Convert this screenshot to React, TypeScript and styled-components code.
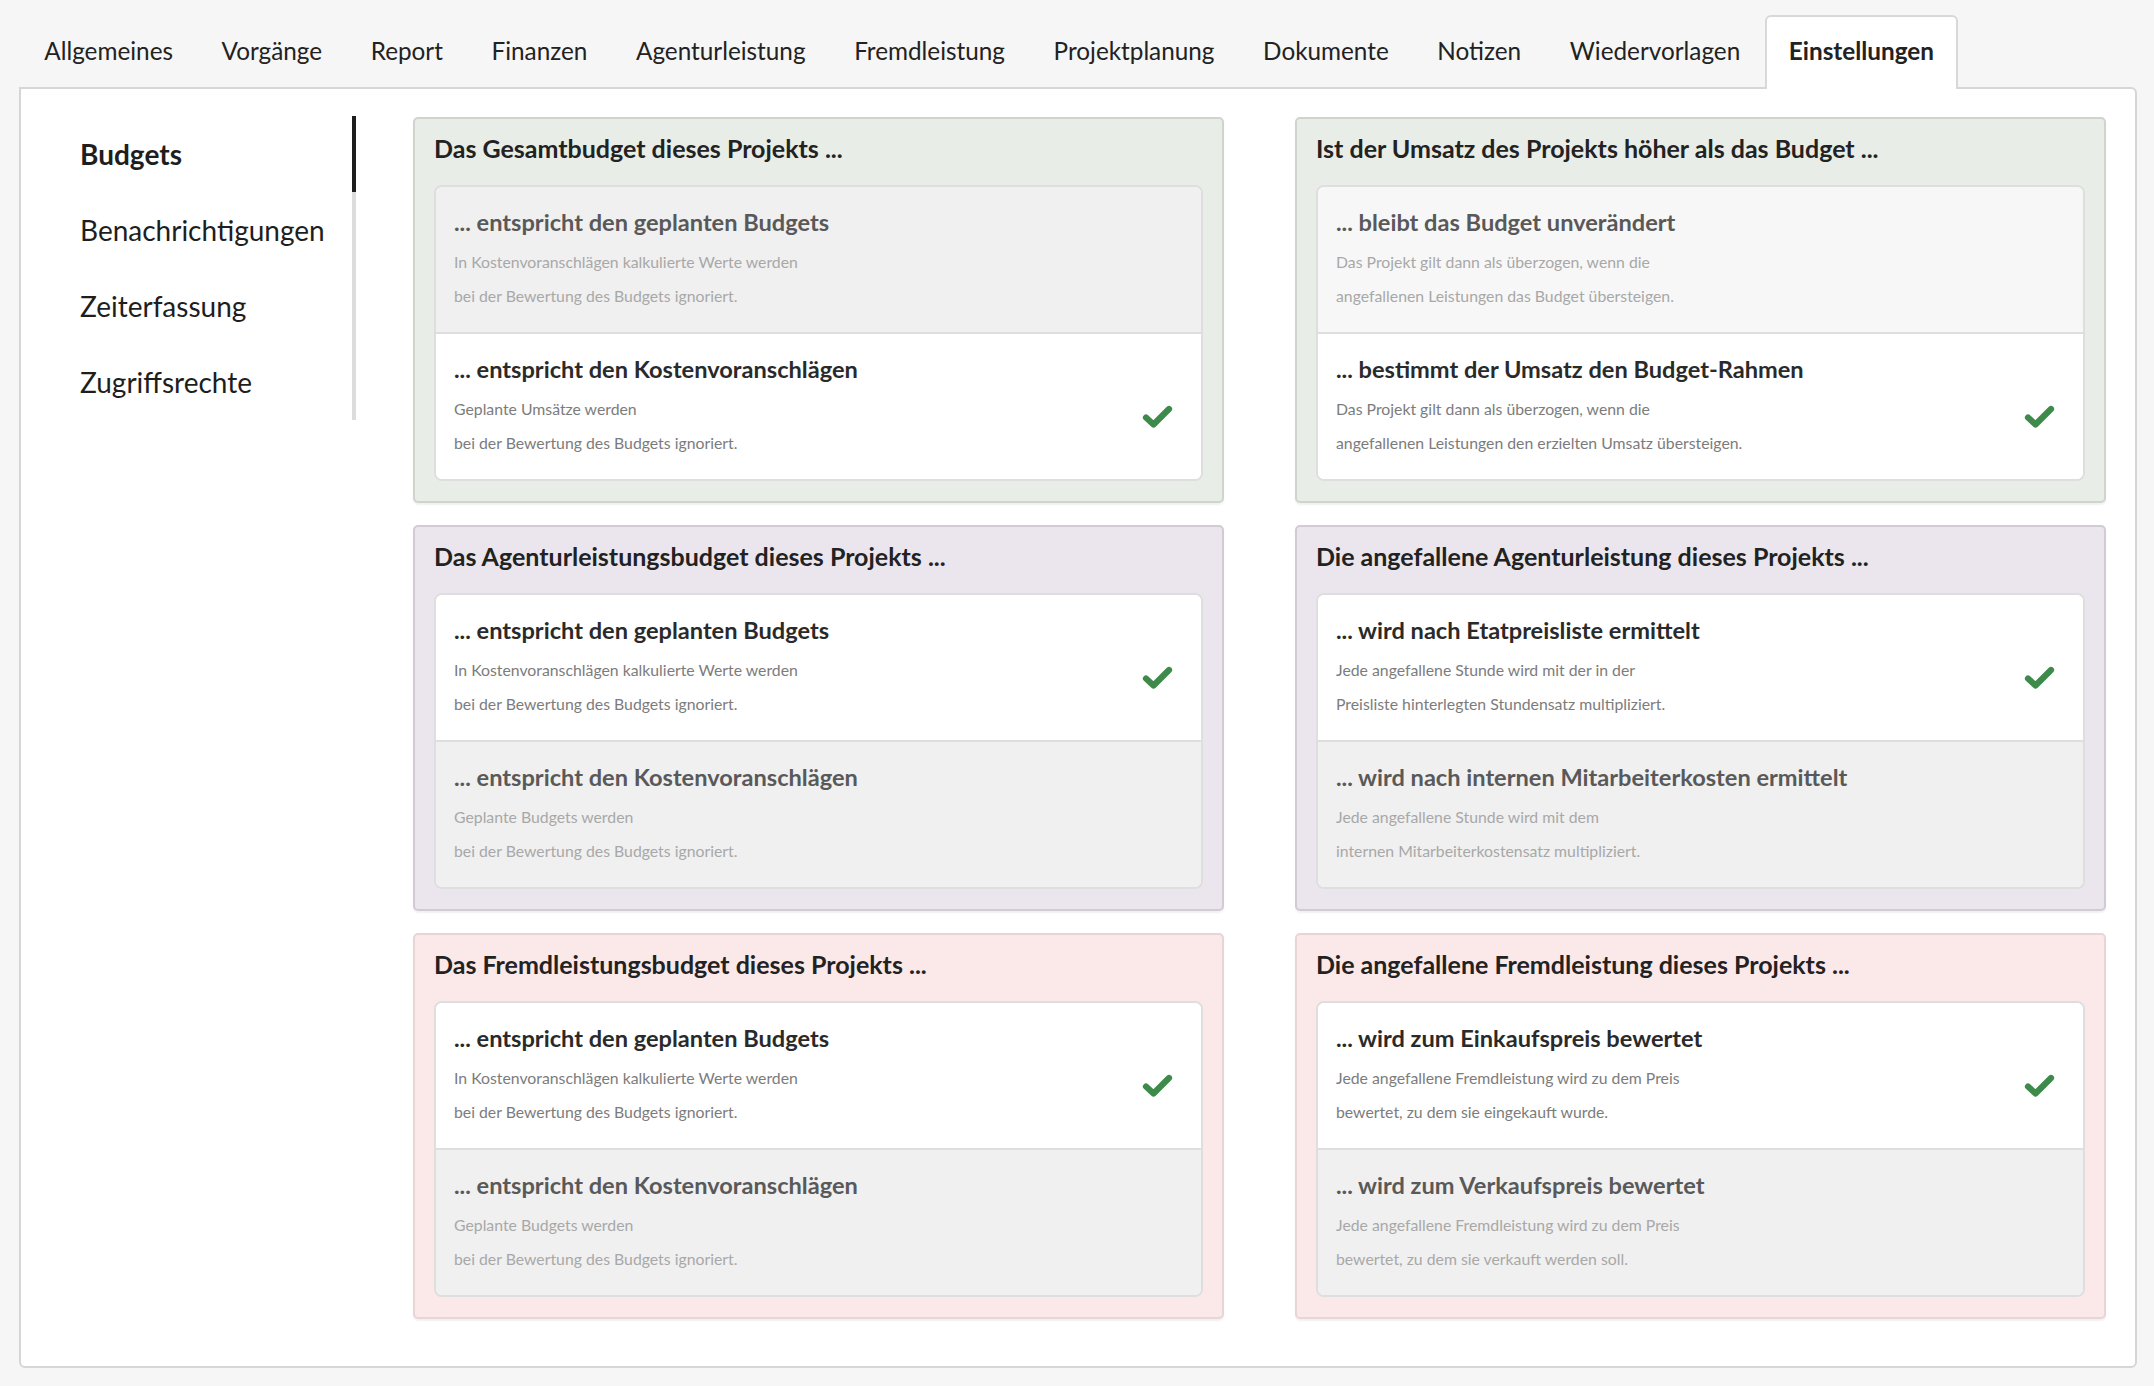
import styled, { createGlobalStyle } from "styled-components";

const GlobalStyle = createGlobalStyle`
    body {
        margin: 0;
        background-color: #f6f6f6;
        font-family: Lato, "Open Sans", sans-serif;
        color: #222;
    }
`;

type Tone = "green" | "purple" | "red";

const tones: Record<Tone, { bg: string; border: string }> = {
    green: { bg: "#e9ede7", border: "#cfd4cd" },
    purple: { bg: "#ebe6ed", border: "#d2cbd6" },
    red: { bg: "#fbe8e8", border: "#e8d5d5" },
};

const Page = styled.div`
    display: flex;
    flex-direction: column;
    min-height: 1386px;
    box-sizing: border-box;
    padding-bottom: 18px;
`;

const TabBar = styled.div`
    display: flex;
    align-items: flex-end;
    padding: 15px 17px 0 20px;
`;

const Tab = styled.div<{ $active?: boolean }>`
    position: relative;
    z-index: 2;
    margin-bottom: -2px;
    padding: 20px 22.3px 24px;
    font-size: 24.3px;
    line-height: 28px;
    font-weight: ${(p) => (p.$active ? 700 : 400)};
    color: #222;
    border: 2px solid ${(p) => (p.$active ? "#d8d8d8" : "transparent")};
    border-bottom: none;
    border-radius: 6px 6px 0 0;
    background-color: ${(p) => (p.$active ? "white" : "transparent")};
    white-space: nowrap;
`;

const Frame = styled.div`
    display: flex;
    align-items: flex-start;
    margin: 0 17px 0 19px;
    padding: 28px 29px 47px 0;
    background-color: white;
    border: 2px solid #d6d6d6;
    border-radius: 0 6px 6px 6px;
`;

const SideNav = styled.nav`
    width: 331px;
    flex-shrink: 0;
    margin-top: -1px;
    margin-right: 57px;
    border-right: 4px solid #dcdcdc;
`;

const NavItem = styled.div<{ $active?: boolean }>`
    margin-right: -4px;
    padding-left: 59px;
    font-size: 28px;
    line-height: 76px;
    font-weight: ${(p) => (p.$active ? 700 : 400)};
    color: #1e1e1e;
    border-right: 4px solid ${(p) => (p.$active ? "#1e1e1e" : "transparent")};
`;

const Grid = styled.div`
    flex: 1;
    display: grid;
    grid-template-columns: 1fr 1fr;
    column-gap: 71px;
    row-gap: 22px;
`;

const Panel = styled.section<{ $tone: Tone }>`
    padding: 0 19px 20px;
    background-color: ${(p) => tones[p.$tone].bg};
    border: 2px solid ${(p) => tones[p.$tone].border};
    border-radius: 5px;
    box-shadow: 0 2px 2px rgba(0, 0, 0, 0.06);
`;

const PanelTitle = styled.h2`
    margin: 0;
    padding: 14px 0 22px;
    font-size: 25px;
    line-height: 30px;
    font-weight: 700;
    color: #222;
`;

const Card = styled.div`
    background-color: white;
    border: 2px solid #dedede;
    border-radius: 8px;
    overflow: hidden;
`;

const Option = styled.div<{ $selected?: boolean; $hover?: boolean }>`
    display: flex;
    align-items: center;
    height: 145px;
    box-sizing: border-box;
    padding: 21px 28px 20px 18px;
    background-color: ${(p) => (p.$selected ? "white" : p.$hover ? "#f7f7f7" : "#f0f0f0")};

    & + & {
        border-top: 2px solid #dedede;
        height: 147px;
    }
`;

const OptionBody = styled.div`
    flex: 1;
`;

const OptionTitle = styled.div<{ $selected?: boolean }>`
    font-size: 23.6px;
    line-height: 28px;
    font-weight: 700;
    color: ${(p) => (p.$selected ? "#2a2a2a" : "#595959")};
    margin-bottom: 9px;
`;

const OptionText = styled.div<{ $selected?: boolean }>`
    font-size: 15.8px;
    line-height: 34px;
    color: ${(p) => (p.$selected ? "#7c7c7c" : "#a8a8a8")};
`;

const Check = styled.svg`
    width: 31px;
    height: 23px;
    margin-top: 19px;
    flex-shrink: 0;
`;

type OptionData = { title: string; lines: string[]; selected?: boolean; hover?: boolean };
type PanelData = { tone: Tone; title: string; options: OptionData[] };

const geplant = ["In Kostenvoranschlägen kalkulierte Werte werden", "bei der Bewertung des Budgets ignoriert."];
const budgetsIgnoriert = ["Geplante Budgets werden", "bei der Bewertung des Budgets ignoriert."];

const panels: PanelData[] = [
    {
        tone: "green",
        title: "Das Gesamtbudget dieses Projekts ...",
        options: [
            { title: "... entspricht den geplanten Budgets", lines: geplant },
            {
                title: "... entspricht den Kostenvoranschlägen",
                lines: ["Geplante Umsätze werden", "bei der Bewertung des Budgets ignoriert."],
                selected: true,
            },
        ],
    },
    {
        tone: "green",
        title: "Ist der Umsatz des Projekts höher als das Budget ...",
        options: [
            {
                title: "... bleibt das Budget unverändert",
                lines: ["Das Projekt gilt dann als überzogen, wenn die", "angefallenen Leistungen das Budget übersteigen."],
                hover: true,
            },
            {
                title: "... bestimmt der Umsatz den Budget-Rahmen",
                lines: ["Das Projekt gilt dann als überzogen, wenn die", "angefallenen Leistungen den erzielten Umsatz übersteigen."],
                selected: true,
            },
        ],
    },
    {
        tone: "purple",
        title: "Das Agenturleistungsbudget dieses Projekts ...",
        options: [
            { title: "... entspricht den geplanten Budgets", lines: geplant, selected: true },
            { title: "... entspricht den Kostenvoranschlägen", lines: budgetsIgnoriert },
        ],
    },
    {
        tone: "purple",
        title: "Die angefallene Agenturleistung dieses Projekts ...",
        options: [
            {
                title: "... wird nach Etatpreisliste ermittelt",
                lines: ["Jede angefallene Stunde wird mit der in der", "Preisliste hinterlegten Stundensatz multipliziert."],
                selected: true,
            },
            {
                title: "... wird nach internen Mitarbeiterkosten ermittelt",
                lines: ["Jede angefallene Stunde wird mit dem", "internen Mitarbeiterkostensatz multipliziert."],
            },
        ],
    },
    {
        tone: "red",
        title: "Das Fremdleistungsbudget dieses Projekts ...",
        options: [
            { title: "... entspricht den geplanten Budgets", lines: geplant, selected: true },
            { title: "... entspricht den Kostenvoranschlägen", lines: budgetsIgnoriert },
        ],
    },
    {
        tone: "red",
        title: "Die angefallene Fremdleistung dieses Projekts ...",
        options: [
            {
                title: "... wird zum Einkaufspreis bewertet",
                lines: ["Jede angefallene Fremdleistung wird zu dem Preis", "bewertet, zu dem sie eingekauft wurde."],
                selected: true,
            },
            {
                title: "... wird zum Verkaufspreis bewertet",
                lines: ["Jede angefallene Fremdleistung wird zu dem Preis", "bewertet, zu dem sie verkauft werden soll."],
            },
        ],
    },
];

const tabs = [
    "Allgemeines",
    "Vorgänge",
    "Report",
    "Finanzen",
    "Agenturleistung",
    "Fremdleistung",
    "Projektplanung",
    "Dokumente",
    "Notizen",
    "Wiedervorlagen",
    "Einstellungen",
];

const navItems = ["Budgets", "Benachrichtigungen", "Zeiterfassung", "Zugriffsrechte"];

const CheckMark = () => (
    <Check viewBox="0 0 31 23">
        <polyline
            points="4,12.5 11.5,19.5 27,4"
            fill="none"
            stroke="#3e8a4a"
            strokeWidth="6.2"
            strokeLinecap="round"
            strokeLinejoin="round"
        />
    </Check>
);

const App = () => {
    return (
        <Page>
            <GlobalStyle />
            <TabBar>
                {tabs.map((t) => (
                    <Tab key={t} $active={t === "Einstellungen"}>
                        {t}
                    </Tab>
                ))}
            </TabBar>
            <Frame>
                <SideNav>
                    {navItems.map((n, i) => (
                        <NavItem key={n} $active={i === 0}>
                            {n}
                        </NavItem>
                    ))}
                </SideNav>
                <Grid>
                    {panels.map((panel) => (
                        <Panel key={panel.title} $tone={panel.tone}>
                            <PanelTitle>{panel.title}</PanelTitle>
                            <Card>
                                {panel.options.map((opt) => (
                                    <Option key={opt.title} $selected={opt.selected} $hover={opt.hover}>
                                        <OptionBody>
                                            <OptionTitle $selected={opt.selected}>{opt.title}</OptionTitle>
                                            {opt.lines.map((l) => (
                                                <OptionText key={l} $selected={opt.selected}>
                                                    {l}
                                                </OptionText>
                                            ))}
                                        </OptionBody>
                                        {opt.selected && <CheckMark />}
                                    </Option>
                                ))}
                            </Card>
                        </Panel>
                    ))}
                </Grid>
            </Frame>
        </Page>
    );
};

export default App;
